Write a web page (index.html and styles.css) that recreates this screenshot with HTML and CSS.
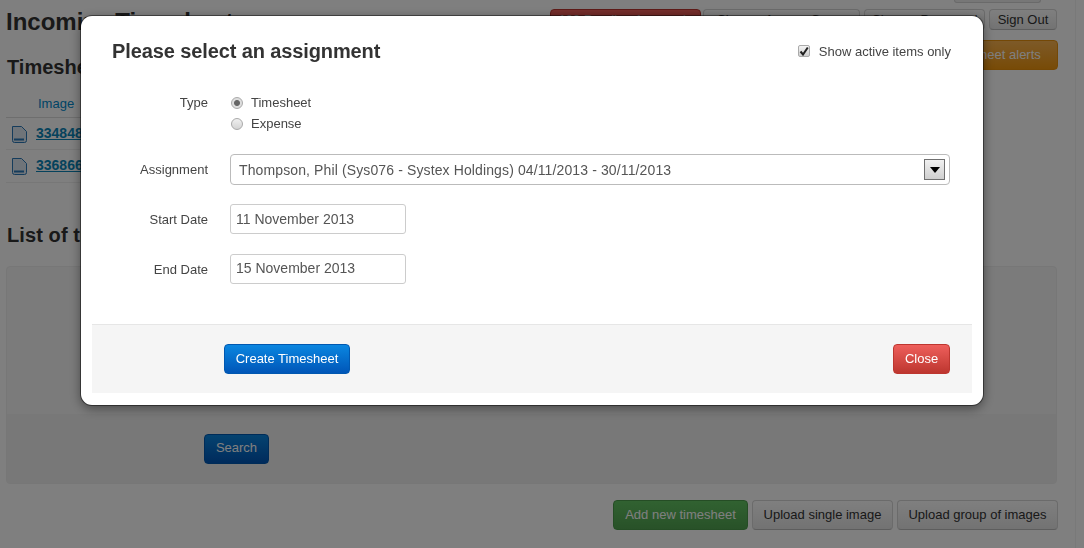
FILE: index.html
```html
<!DOCTYPE html>
<html lang="en">
<head>
<meta charset="utf-8">
<title>Incoming Timesheets</title>
<link rel="stylesheet" href="styles.css">
</head>
<body>
<div class="page">
  <div class="user-tab"></div>
  <header class="top-row">
    <h1 class="page-title">Incoming Timesheets</h1>
    <nav class="top-actions">
      <a class="btn btn-danger btn-red-top">100 Pending Approvals</a>
      <a class="btn btn-access">Change Access Group</a>
      <a class="btn btn-password">Change Password</a>
      <a class="btn btn-signout">Sign Out</a>
    </nav>
  </header>
  <section class="alerts-row">
    <h2 class="section-title section-first">Timesheets received</h2>
    <a class="btn btn-warning">Timesheet alerts</a>
  </section>
  <table class="images">
    <thead><tr><th>Image</th></tr></thead>
    <tbody>
      <tr><td><svg class="doc" viewBox="0 0 16 17"><path class="doc-body" d="M1.5.5h9l5 5v9a2 2 0 0 1-2 2h-10a2 2 0 0 1-2-2z"/><path class="doc-band" d="M3 13.5h10"/></svg><a class="img-link">3348485</a></td></tr>
      <tr><td><svg class="doc" viewBox="0 0 16 17"><path class="doc-body" d="M1.5.5h9l5 5v9a2 2 0 0 1-2 2h-10a2 2 0 0 1-2-2z"/><path class="doc-band" d="M3 13.5h10"/></svg><a class="img-link">3368663</a></td></tr>
    </tbody>
  </table>
  <h2 class="section-title section-list">List of timesheets</h2>
  <section class="panel">
    <div class="panel-body"></div>
    <div class="panel-foot"><a class="btn btn-primary btn-search">Search</a></div>
  </section>
  <div class="bottom-actions">
    <a class="btn btn-success">Add new timesheet</a>
    <a class="btn">Upload single image</a>
    <a class="btn">Upload group of images</a>
  </div>
</div>

<div class="backdrop"></div>

<div class="modal" role="dialog">
  <div class="modal-head">
    <h3 class="modal-title">Please select an assignment</h3>
    <label class="check-label">
      <span class="check-box"><svg viewBox="0 0 10 10"><path d="M1.5 5.5 4 8.5 8.8 1.5" /></svg></span>
      Show active items only
    </label>
  </div>
  <form class="modal-form">
    <div class="row row-type">
      <span class="field-label">Type</span>
      <div class="radios">
        <label class="radio-label"><input class="radio" type="radio" name="type" checked>Timesheet</label>
        <label class="radio-label"><input class="radio" type="radio" name="type">Expense</label>
      </div>
    </div>
    <div class="row row-select">
      <span class="field-label">Assignment</span>
      <div class="select">
        <span>Thompson, Phil (Sys076 - Systex Holdings) 04/11/2013 - 30/11/2013</span>
        <span class="select-arrow"></span>
      </div>
    </div>
    <div class="row">
      <span class="field-label">Start Date</span>
      <input class="date" type="text" value="11 November 2013">
    </div>
    <div class="row">
      <span class="field-label">End Date</span>
      <input class="date date-end" type="text" value="15 November 2013">
    </div>
  </form>
  <div class="modal-foot">
    <a class="btn btn-primary btn-create">Create Timesheet</a>
    <a class="btn btn-danger btn-close">Close</a>
  </div>
</div>
</body>
</html>
```

FILE: styles.css
```css
* { box-sizing: border-box; }
html, body { margin: 0; height: 100%; }
body {
  width: 1084px;
  height: 548px;
  overflow: hidden;
  background: #fff;
  font-family: "Liberation Sans", Arial, sans-serif;
  font-size: 13px;
  color: #333;
}
.page {
  width: 1076px;
  height: 548px;
  padding-left: 6px;
  padding-right: 18px;
  border-right: 1px solid #f2f2f2;
  overflow: hidden;
}
.user-tab {
  width: 87px;
  height: 3px;
  margin-left: auto;
  margin-right: 16px;
  border: 1px solid #d4d4d4;
  border-top: 0;
  border-radius: 0 0 6px 6px;
  background: #eee;
}
.top-row { display: flex; justify-content: space-between; margin-top: 6px; height: 31px; }
.page-title { margin: -1px 0 0; font-size: 24px; line-height: 28px; color: #333; word-spacing: -4px; }
.top-actions { display: flex; gap: 4px; }
.btn {
  display: inline-flex;
  align-items: center;
  justify-content: center;
  height: 30px;
  padding-bottom: 2px;
  border: 1px solid #d6d6d6;
  border-bottom-color: #bbb;
  border-radius: 4px;
  background: linear-gradient(#fff, #e6e6e6);
  color: #333;
  font-size: 13px;
  white-space: nowrap;
}
.top-actions .btn { height: 21px; padding-bottom: 0; }
.btn-red-top { width: 151px; margin-right: -2px; }
.btn-access { width: 157px; }
.btn-password { width: 121px; }
.btn-signout { width: 68px; }
.btn-danger { border-color: #bd362f; background: linear-gradient(#ee5f5b, #bd362f); color: #fff; }
.btn-warning {
  width: 130px;
  margin-right: -1px;
  border-color: #e8910c;
  background: linear-gradient(#fbb450, #f0960e);
  color: #fff;
}
.btn-success { border-color: #4a9a4a; background: linear-gradient(#62c462, #51a351); color: #fff; width: 135px; }
.btn-primary { border-color: #0058b0; background: linear-gradient(#0a86e0, #0056b8); color: #fff; }
.alerts-row { display: flex; justify-content: space-between; height: 51px; }
.section-title { margin: 0; font-size: 20px; line-height: 24px; color: #333; }
.section-first { margin-top: 15px; padding-left: 1px; }
.images { width: 300px; border-collapse: collapse; }
.images th {
  height: 26px;
  padding: 0 0 0 32px;
  text-align: left;
  font-weight: normal;
  font-size: 13px;
  color: #08c;
  border-bottom: 1px solid #ddd;
}
.images td { height: 32.5px; padding: 1px 0 0 6px; border-bottom: 1px solid #efefef; font-size: 14px; }
.doc { width: 16px; height: 17px; vertical-align: middle; margin-left: -1px; margin-right: 9px; }
.doc-body { fill: #dfe8f2; stroke: #2a78b8; stroke-width: 1; }
.doc-band { fill: none; stroke: #2a78b8; stroke-width: 2; }
.img-link { font-weight: bold; color: #0a85b8; text-decoration: underline; }
.section-list { margin-top: 40px; padding-left: 1px; letter-spacing: .1px; }
.panel {
  margin-top: 19px;
  height: 218px;
  display: flex;
  flex-direction: column;
  border: 1px solid #eee;
  border-radius: 4px;
  background: #f6f6f6;
}
.panel-body { height: 147px; }
.panel-foot { flex: 1; background: #f0f0f0; padding: 20px 0 0 197px; }
.btn-search { width: 65px; }
.bottom-actions { display: flex; justify-content: flex-end; gap: 4px; margin-top: 16px; margin-right: -1px; }
.bottom-actions .btn { padding-bottom: 1px; }
.bottom-actions .btn:nth-child(2) { width: 141px; }
.bottom-actions .btn:nth-child(3) { width: 161px; }

.backdrop { position: fixed; inset: 0; background: rgba(0, 0, 0, .5); }
.modal {
  position: fixed;
  left: 81px;
  top: 16px;
  width: 902px;
  height: 389px;
  padding: 0 11px;
  background: #fff;
  border-radius: 11px;
  box-shadow: 0 0 0 1px rgba(0,0,0,.45), 0 3px 12px rgba(0, 0, 0, .45);
}
.modal-head {
  display: flex;
  justify-content: space-between;
  height: 76px;
  padding: 25px 21px 0 20px;
}
.modal-title { margin: -1px 0 0; font-size: 20px; line-height: 22px; color: #333; letter-spacing: -.11px; }
.check-label { display: flex; align-items: center; gap: 9px; height: 20px; color: #444; }
.check-box {
  width: 12px;
  height: 12px;
  margin-left: -1px;
  border: 1px solid #aaa;
  border-radius: 2px;
  background: linear-gradient(#f4f4f4, #cfcfcf);
  display: flex;
}
.check-box svg { width: 10px; height: 10px; }
.check-box path { fill: none; stroke: #222; stroke-width: 2; }
.modal-form { padding-right: 22px; }
.row { display: flex; gap: 22px; align-items: center; margin-bottom: 20px; }
.row-type { align-items: flex-start; }
.row-select { margin-bottom: 19px; }
.field-label { width: 116px; text-align: right; line-height: 21px; color: #444; flex: none; }
.radios { display: flex; flex-direction: column; }
.radio-label { display: flex; align-items: center; gap: 8px; height: 21px; color: #444; }
.radio {
  appearance: none;
  width: 12px;
  height: 12px;
  margin: 0 0 0 1px;
  border: 1px solid #aaa;
  border-radius: 50%;
  background: linear-gradient(#f0f0f0, #d4d4d4);
}
.radio:checked { background: radial-gradient(circle, #666 0 2.5px, #ddd 3.5px); }
.select {
  flex: 1;
  height: 31px;
  display: flex;
  align-items: center;
  justify-content: space-between;
  padding: 0 4px 0 8px;
  border: 1px solid #bbb;
  border-radius: 4px;
  color: #555;
  font-size: 14px;
  letter-spacing: .12px;
}
.select-arrow {
  width: 21px;
  height: 21px;
  border: 1px solid #707070;
  background: linear-gradient(#f0f0f0, #cfcfcf);
  display: flex;
  align-items: center;
  justify-content: center;
}
.select-arrow::after {
  content: "";
  border-left: 5px solid transparent;
  border-right: 5px solid transparent;
  border-top: 6px solid #000;
}
.date {
  width: 176px;
  height: 30px;
  padding: 0 5px;
  border: 1px solid #ccc;
  border-radius: 3px;
  font: inherit;
  font-size: 14px;
  color: #555;
}
.date-end { padding-bottom: 2px; }
.modal-foot {
  display: flex;
  justify-content: space-between;
  height: 69px;
  margin-top: 40px;
  padding: 19px 22px 0 132px;
  background: #f5f5f5;
  border-top: 1px solid #e6e6e6;
}
.modal-form .row:last-child { margin-bottom: 0; }
.btn-create { width: 126px; }
.btn-close { width: 57px; }
```
